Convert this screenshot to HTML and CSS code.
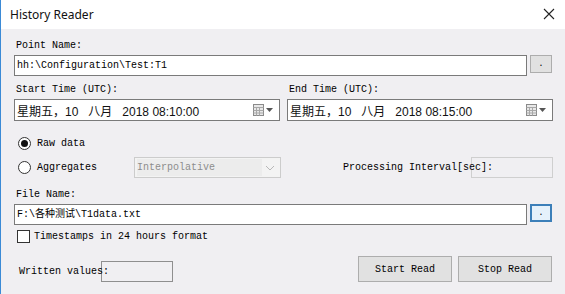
FILE: index.html
```html
<!DOCTYPE html>
<html lang="en">
<head>
    <meta charset="UTF-8">
    <title>History Reader</title>
    <link rel="stylesheet" href="styles.css">
</head>
<body>
    <div class="window">
        <div class="titlebar">
            <span class="title">History Reader</span>
            <svg class="close" width="12" height="12" viewBox="0 0 12 12">
                <path d="M1 1 L11 11 M11 1 L1 11" stroke="#222" stroke-width="1.1" fill="none"/>
            </svg>
        </div>

        <div class="content">
            <div class="label">Point Name:</div>
            <div class="field-row">
                <div class="textbox">hh:\Configuration\Test:T1</div>
                <button class="browse">.</button>
            </div>

            <div class="time-grid">
                <div>
                    <div class="label">Start Time (UTC):</div>
                    <div class="datebox">
                        <span class="date-text">星期五，10   八月   2018 08:10:00</span>
                        <svg class="cal" width="22" height="12" viewBox="0 0 22 12">
                            <rect x="0.5" y="0.5" width="10" height="11" fill="#e8e8e8" stroke="#8a8a8a"/>
                            <path d="M0.5 3.5 H10.5 M0.5 6.5 H10.5 M0.5 9 H10.5 M3.5 3.5 V11.5 M6.5 3.5 V11.5" stroke="#a8a8a8"/>
                            <path d="M13 4 H20 L16.5 8 Z" fill="#555"/>
                        </svg>
                    </div>
                </div>
                <div>
                    <div class="label">End Time (UTC):</div>
                    <div class="datebox">
                        <span class="date-text">星期五，10   八月   2018 08:15:00</span>
                        <svg class="cal" width="22" height="12" viewBox="0 0 22 12">
                            <rect x="0.5" y="0.5" width="10" height="11" fill="#e8e8e8" stroke="#8a8a8a"/>
                            <path d="M0.5 3.5 H10.5 M0.5 6.5 H10.5 M0.5 9 H10.5 M3.5 3.5 V11.5 M6.5 3.5 V11.5" stroke="#a8a8a8"/>
                            <path d="M13 4 H20 L16.5 8 Z" fill="#555"/>
                        </svg>
                    </div>
                </div>
            </div>

            <div class="radio-row first">
                <span class="radio checked"></span>
                <span class="radio-label">Raw data</span>
            </div>
            <div class="radio-row">
                <span class="radio"></span>
                <span class="radio-label">Aggregates</span>
                <div class="combo">
                    <span>Interpolative</span>
                    <svg width="10" height="6" viewBox="0 0 10 6">
                        <path d="M1 1 L5 5 L9 1" stroke="#b8b8b8" fill="none"/>
                    </svg>
                </div>
                <span class="proc-label">Processing Interval[sec]:</span>
                <div class="proc-box"></div>
            </div>

            <div class="label file-label">File Name:</div>
            <div class="field-row">
                <div class="textbox">F:\各种测试\T1data.txt</div>
                <button class="browse focused">.</button>
            </div>

            <div class="check-row">
                <span class="checkbox"></span>
                <span>Timestamps in 24 hours format</span>
            </div>

            <div class="bottom-row">
                <span class="written-label">Written values:</span>
                <div class="written-box"></div>
                <div class="actions">
                    <button class="action">Start Read</button>
                    <button class="action">Stop Read</button>
                </div>
            </div>
        </div>
    </div>
</body>
</html>
```

FILE: styles.css
```css
body {
    margin: 0;
    background: #f0eff2;
    font-family: "Liberation Mono", "Noto Sans CJK SC", monospace;
    font-size: 10px;
    color: #000;
}

.window {
    width: 565px;
    height: 294px;
    box-sizing: border-box;
    border-left: 1px solid #3b8ad6;
    background: #f0eff2;
    overflow: hidden;
}

.titlebar {
    height: 29px;
    background: #ffffff;
    display: flex;
    align-items: center;
    justify-content: space-between;
    padding: 0 10px 0 9px;
}

.title {
    font-family: "Noto Sans", "Liberation Sans", sans-serif;
    font-size: 12px;
    color: #111;
}

.close {
    margin-top: -1px;
}

.content {
    padding: 10px 13px 0 13px;
}

.label {
    height: 14px;
    line-height: 14px;
    margin-left: 2px;
    margin-bottom: 2px;
    white-space: pre;
}

.field-row {
    display: flex;
    align-items: flex-start;
    gap: 3px;
}

.textbox {
    flex: 1;
    height: 21px;
    box-sizing: border-box;
    border: 1px solid #7a7a7a;
    background: #fff;
    line-height: 19px;
    padding-left: 2px;
    white-space: pre;
}

.browse {
    width: 22px;
    height: 18px;
    margin: 0;
    padding: 0;
    box-sizing: border-box;
    border: 1px solid #adadad;
    background: #e1e1e1;
    font-family: "Liberation Mono", monospace;
    font-size: 9px;
    line-height: 16px;
    color: #000;
}

.browse.focused {
    border: 2px solid #3c7fb9;
    background: #e5f1fb;
    line-height: 14px;
}

.time-grid {
    display: grid;
    grid-template-columns: 266px 266px;
    column-gap: 7px;
    margin-top: 7px;
}

.datebox {
    height: 22px;
    box-sizing: border-box;
    border: 1px solid #7a7a7a;
    background: #fff;
    display: flex;
    align-items: center;
    justify-content: space-between;
    padding: 0 4px 0 2px;
}

.date-text {
    font-family: "Liberation Sans", "Noto Sans CJK SC", sans-serif;
    font-size: 12px;
    white-space: pre;
    color: #111;
}

.radio-row {
    display: flex;
    align-items: center;
    height: 21px;
    margin-top: 4px;
    padding-left: 4px;
}

.radio-row.first {
    height: 20px;
    margin-top: 12px;
}

.radio {
    width: 13px;
    height: 13px;
    box-sizing: border-box;
    border: 1px solid #333;
    border-radius: 50%;
    background: #fff;
    display: flex;
    align-items: center;
    justify-content: center;
}

.radio.checked::after {
    content: "";
    width: 7px;
    height: 7px;
    border-radius: 50%;
    background: #111;
}

.radio-label {
    margin-left: 6px;
    width: 97px;
}

.combo {
    width: 147px;
    height: 21px;
    box-sizing: border-box;
    border: 1px solid #cccccc;
    background: #f3f3f3;
    display: flex;
    align-items: center;
    justify-content: space-between;
    padding: 0 5px 0 2px;
    color: #8d8d8d;
}

.combo span {
    background: #ececec;
    width: 125px;
    line-height: 17px;
}

.proc-label {
    margin-left: auto;
    margin-right: -22px;
    position: relative;
    z-index: 1;
}

.proc-box {
    width: 82px;
    height: 21px;
    box-sizing: border-box;
    border: 1px solid #cfcfcf;
    margin-right: -1px;
}

.file-label {
    margin-top: 10px;
}

.check-row {
    display: flex;
    align-items: center;
    height: 14px;
    margin-top: 4px;
    padding-left: 3px;
}

.checkbox {
    width: 13px;
    height: 13px;
    box-sizing: border-box;
    border: 1px solid #333;
    background: #fff;
    margin-right: 4px;
}

.bottom-row {
    display: flex;
    align-items: flex-end;
    margin-top: 13px;
}

.written-label {
    margin-left: 5px;
    margin-right: -8px;
    line-height: 17px;
    margin-bottom: 2px;
    position: relative;
    z-index: 1;
}

.written-box {
    width: 72px;
    height: 21px;
    box-sizing: border-box;
    border: 1px solid #8f8f8f;
}

.actions {
    margin-left: auto;
    display: flex;
    gap: 6px;
}

.action {
    width: 94px;
    height: 26px;
    margin: 0;
    box-sizing: border-box;
    border: 1px solid #adadad;
    background: #e1e1e1;
    font-family: "Liberation Mono", monospace;
    font-size: 10px;
    color: #000;
}
```
